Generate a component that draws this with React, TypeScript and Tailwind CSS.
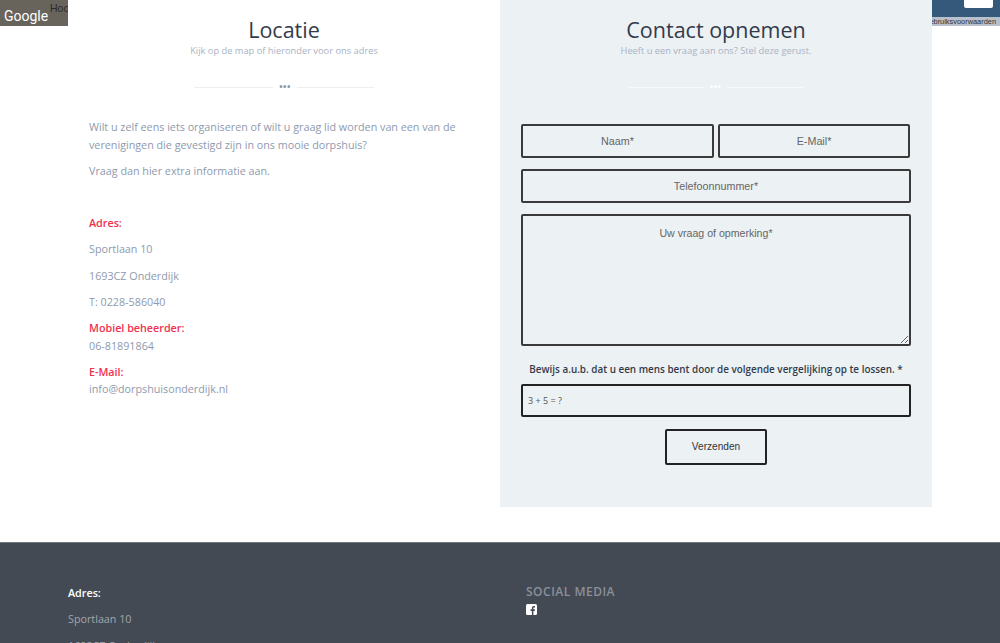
import React from "react";

const inputClass =
  "h-[34px] min-w-0 border-2 border-[#3a3a3a] rounded-[2px] bg-transparent text-center text-[10.75px] text-[#555] font-['Liberation_Sans',sans-serif] placeholder:text-[#666] outline-none";

const App = () => {
  return (
    <div className="h-[643px] overflow-hidden bg-white font-['Open_Sans',sans-serif]">
      <div className="flex h-[542px] items-start">
        {/* Map strip, left */}
        <div className="relative h-[26px] w-[68px] overflow-hidden bg-[#68645c]">
          <span className="absolute left-[4px] top-[7px] font-['Roboto',sans-serif] text-[14px] leading-[18px] text-white">
            Google
          </span>
          <span className="absolute left-[50px] top-[2px] font-['Liberation_Sans',sans-serif] text-[10.5px] leading-[12px] text-[#2b2b2b]">
            Hoofd
          </span>
        </div>

        {/* Location */}
        <section className="h-[507px] w-[432px] pt-[17px]">
          <h2 className="text-center text-[21.5px] leading-[26px] text-[#333b4a]">Locatie</h2>
          <p className="mt-[1px] text-center text-[9.3px] leading-[14px] text-[#a9b2c3]">
            Kijk op de map of hieronder voor ons adres
          </p>
          <div className="mt-[24px] flex items-center justify-center gap-[6px]">
            <span className="h-px w-[79px] bg-[#eeeeee]" />
            <span className="text-[9px] leading-[10px] font-bold tracking-[0.5px] text-[#8a93a5]">•••</span>
            <span className="h-px w-[77px] bg-[#eeeeee]" />
          </div>
          <div className="mt-[27px] pl-[21px] text-[10.75px] leading-[17.5px] text-[#8e9aae]">
            <p>
              Wilt u zelf eens iets organiseren of wilt u graag lid worden van een van de verenigingen die gevestigd zijn in ons mooie dorpshuis?
            </p>
            <p className="mt-[9px]">Vraag dan hier extra informatie aan.</p>
            <p className="mt-[34.5px] font-semibold text-[#f0304f]">Adres:</p>
            <p className="mt-[8.75px]">Sportlaan 10</p>
            <p className="mt-[8.75px]">1693CZ Onderdijk</p>
            <p className="mt-[8.75px]">T: 0228-586040</p>
            <p className="mt-[8.75px] font-semibold text-[#f0304f]">Mobiel beheerder:</p>
            <p>06-81891864</p>
            <p className="mt-[8.75px] font-semibold text-[#f0304f]">E-Mail:</p>
            <p>info@dorpshuisonderdijk.nl</p>
          </div>
        </section>

        {/* Contact form */}
        <section className="h-[507px] w-[432px] bg-[#ecf1f4] pt-[17px]">
          <h2 className="text-center text-[21.5px] leading-[26px] text-[#333b4a]">Contact opnemen</h2>
          <p className="mt-[1px] text-center text-[9.3px] leading-[14px] text-[#a9b2c3]">
            Heeft u een vraag aan ons? Stel deze gerust.
          </p>
          <div className="mt-[24px] flex items-center justify-center gap-[6px]">
            <span className="h-px w-[76px] bg-[#f6f8f9]" />
            <span className="text-[9px] leading-[10px] font-bold tracking-[0.5px] text-white">•••</span>
            <span className="h-px w-[77px] bg-[#f6f8f9]" />
          </div>
          <form className="mt-[32px] flex flex-col px-[21px]">
            <div className="flex gap-[4px]">
              <input className={`${inputClass} w-[193px]`} placeholder="Naam*" />
              <input className={`${inputClass} w-[192px]`} placeholder="E-Mail*" />
            </div>
            <input className={`${inputClass} mt-[11px] w-[390px]`} placeholder="Telefoonnummer*" />
            <textarea
              className="mt-[11px] h-[132px] w-[390px] border-2 border-[#3a3a3a] rounded-[2px] bg-transparent pt-[10px] text-center text-[10.6px] text-[#555] font-['Liberation_Sans',sans-serif] placeholder:text-[#666] outline-none"
              placeholder="Uw vraag of opmerking*"
            />
            <p className="mt-[15px] w-[390px] text-center text-[9.9px] leading-[16px] font-semibold text-[#333b4a]">
              Bewijs a.u.b. dat u een mens bent door de volgende vergelijking op te lossen. *
            </p>
            <input
              className="mt-[7px] h-[33px] w-[390px] border-2 border-[#222] rounded-[2px] bg-transparent px-[5px] text-[9px] text-[#555] font-['Open_Sans',sans-serif] placeholder:text-[#555] outline-none"
              placeholder="3 + 5 = ?"
            />
            <button
              type="button"
              className="mx-auto mt-[12px] h-[36px] w-[102px] border-2 border-[#222] rounded-[2px] text-[10.1px] text-[#333] font-['Liberation_Sans',sans-serif]"
            >
              Verzenden
            </button>
          </form>
        </section>

        {/* Map strip, right */}
        <div className="flex h-[26px] w-[68px] flex-col overflow-hidden">
          <div className="h-[17px] bg-[#34597a] pl-[32px]">
            <div className="h-[8px] w-[29px] rounded-b-[2px] bg-white" />
          </div>
          <div className="flex h-[9px] items-center justify-end bg-[#b8c1cb] pr-[4px]">
            <span className="font-['Liberation_Sans',sans-serif] text-[7.4px] leading-[9px] whitespace-nowrap text-[#333]">
              ebruiksvoorwaarden
            </span>
          </div>
        </div>
      </div>

      {/* Footer */}
      <footer className="flex h-[200px] border-t border-[#6f757d] bg-[#434a54] pt-[42px] pl-[68px]">
        <div className="w-[458px] text-[10.75px] leading-[17.5px] text-[#a3a6ab]">
          <p className="font-semibold text-white">Adres:</p>
          <p className="mt-[8.75px]">Sportlaan 10</p>
          <p className="mt-[8.75px]">1693CZ Onderdijk</p>
        </div>
        <div className="-mt-[2px]">
          <h3 className="text-[12px] leading-[17px] font-semibold tracking-[0.5px] text-[#8b9098]">SOCIAL MEDIA</h3>
          <svg className="mt-[4px]" width="11" height="11" viewBox="0 0 11 11">
            <rect width="11" height="11" rx="1.5" fill="#fff" />
            <path d="M7.4 11V6.9h1.3l.2-1.6H7.4v-1c0-.5.1-.8.8-.8H9V2.1C8.8 2.1 8.4 2 7.9 2 6.7 2 5.9 2.7 5.9 4.1v1.2H4.6v1.6h1.3V11z" fill="#434a54" />
          </svg>
        </div>
      </footer>
    </div>
  );
};

export default App;
